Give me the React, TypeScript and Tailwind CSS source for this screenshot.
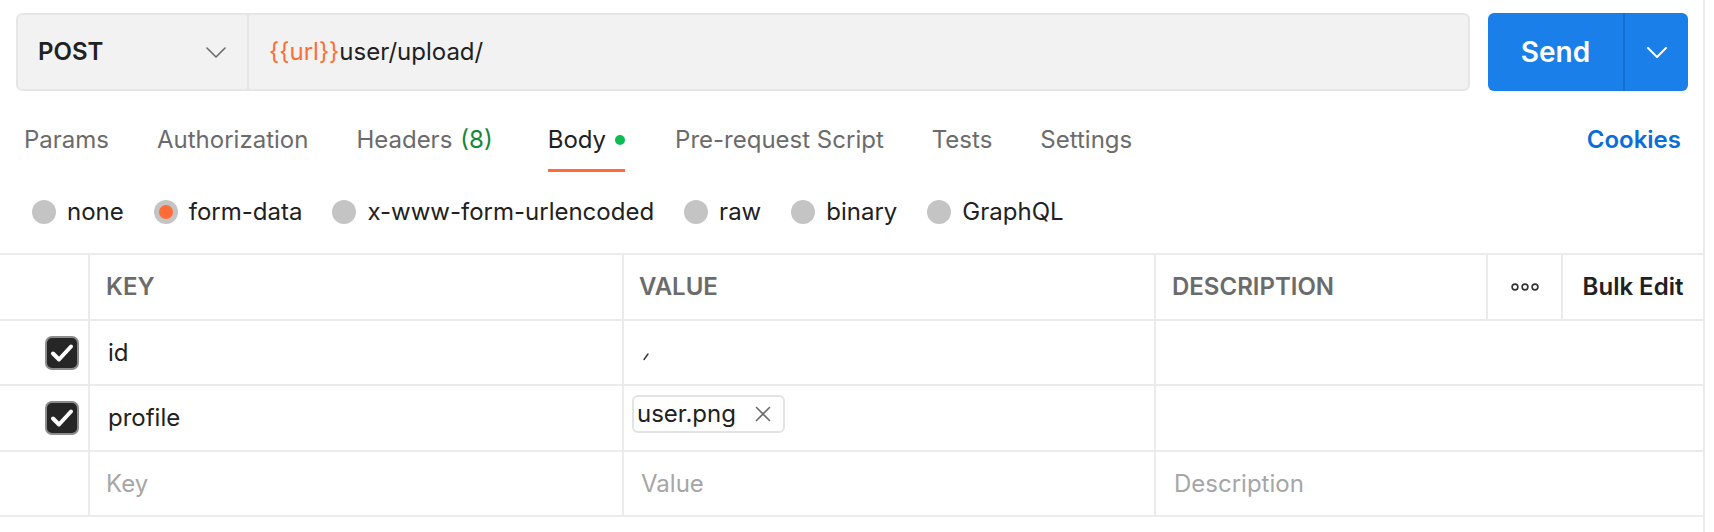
import React from "react";

const tabs = [
  { label: "Params" },
  { label: "Authorization" },
  { label: "Headers", count: "(8)", extra: "mr-[7px]" },
  { label: "Body", active: true, dot: true, extra: "mr-[2px]" },
  { label: "Pre-request Script" },
  { label: "Tests" },
  { label: "Settings" },
];

const bodyTypes = [
  { label: "none" },
  { label: "form-data", selected: true },
  { label: "x-www-form-urlencoded" },
  { label: "raw" },
  { label: "binary" },
  { label: "GraphQL" },
];

const Chevron = ({ color, width = 2 }: { color: string; width?: number }) => (
  <svg width="20" height="11" viewBox="0 0 20 11" fill="none">
    <path d="M1 1l9 9 9-9" stroke={color} strokeWidth={width} strokeLinecap="round" strokeLinejoin="round" />
  </svg>
);

const Checkbox = () => (
  <div className="w-[34px] h-[34px] rounded-[7px] bg-[#262626] border-2 border-[#8c8c8c] flex items-center justify-center">
    <svg width="24" height="20" viewBox="0 0 24 20" fill="none">
      <path d="M3 10.5l6 6L21 3.5" stroke="white" strokeWidth="4" strokeLinecap="round" strokeLinejoin="round" />
    </svg>
  </div>
);

const Radio = ({ selected }: { selected?: boolean }) => (
  <span className="w-[24px] h-[24px] rounded-full bg-[#c4c4c4] flex items-center justify-center">
    {selected && <span className="w-[14px] h-[14px] rounded-full bg-[#ff6c37]" />}
  </span>
);

const RequestBody: React.FC = () => {
  return (
    <div className="w-[1714px] h-[532px] bg-white font-['Inter',sans-serif] text-[24px] leading-[32px] text-[#212121]">
      <div className="w-[1705px] h-full border-r-2 border-[#ebebeb]">
        {/* url bar */}
        <div className="flex gap-[18px] pl-[16px] pr-[15px] pt-[13px]">
          <div className="flex-1 h-[78px] flex bg-[#f2f2f2] border-2 border-[#e6e6e6] rounded-[6px]">
            <div className="w-[231px] flex items-center justify-between pl-[20px] pr-[21px] border-r-2 border-[#e6e6e6]">
              <span className="font-semibold">POST</span>
              <Chevron color="#6b6b6b" width={1.6} />
            </div>
            <div className="flex items-center pl-[20px]">
              <span className="text-[#ff6c37]">{"{{url}}"}</span>
              <span>user/upload/</span>
            </div>
          </div>
          <div className="w-[200px] h-[78px] flex rounded-[6px] bg-[#1a7fe8] text-white">
            <div className="w-[135px] flex items-center justify-center text-[28px] font-semibold">Send</div>
            <div className="flex-1 flex items-center justify-center border-l-2 border-[#1670d2]">
              <Chevron color="white" width={2} />
            </div>
          </div>
        </div>

        {/* tabs */}
        <div className="flex h-[81px] pl-[24px] pr-[22px]">
          <div className="flex gap-[48px]">
            {tabs.map((t) => (
              <div key={t.label} className={`flex flex-col pt-[33px] ${t.extra ?? ""}`}>
                <div className={`flex items-center ${t.active ? "text-[#212121]" : "text-[#6b6b6b]"}`}>
                  <span>{t.label}</span>
                  {t.count && <span className="ml-[8px] text-[#14873b]">{t.count}</span>}
                  {t.dot && <span className="ml-[9px] w-[10px] h-[10px] rounded-full bg-[#0cbb52]" />}
                </div>
                <div className={`mt-[13px] h-[3px] ${t.active ? "bg-[#ff6c37]" : ""}`} />
              </div>
            ))}
          </div>
          <div className="ml-auto pt-[33px] font-semibold text-[#0b6ed8]">Cookies</div>
        </div>

        {/* body type radios */}
        <div className="flex items-center h-[81px] pl-[32px] gap-[30px] pb-[2px]">
          {bodyTypes.map((b) => (
            <label key={b.label} className="flex items-center gap-[11px]">
              <Radio selected={b.selected} />
              <span>{b.label}</span>
            </label>
          ))}
        </div>

        {/* form data table */}
        <div className="border-t-2 border-[#ebebeb]">
          <div className="flex h-[66px] border-b-2 border-[#ebebeb] font-semibold text-[#6b6b6b]">
            <div className="w-[90px] border-r-2 border-[#ebebeb]" />
            <div className="w-[534px] border-r-2 border-[#ebebeb] flex items-center pl-[16px]">KEY</div>
            <div className="w-[532px] border-r-2 border-[#ebebeb] flex items-center pl-[15px]">VALUE</div>
            <div className="w-[332px] border-r-2 border-[#ebebeb] flex items-center pl-[16px]">DESCRIPTION</div>
            <div className="w-[75px] border-r-2 border-[#ebebeb] flex items-center justify-center">
              <svg width="28" height="8" viewBox="0 0 28 8" fill="none">
                <circle cx="4" cy="4" r="2.9" stroke="#333" strokeWidth="1.6" />
                <circle cx="14" cy="4" r="2.9" stroke="#333" strokeWidth="1.6" />
                <circle cx="24" cy="4" r="2.9" stroke="#333" strokeWidth="1.6" />
              </svg>
            </div>
            <div className="flex-1 flex items-center justify-center text-[#212121]">Bulk Edit</div>
          </div>

          <div className="flex h-[65px] border-b-2 border-[#ebebeb]">
            <div className="w-[90px] border-r-2 border-[#ebebeb] flex items-center justify-end pr-[9px]">
              <Checkbox />
            </div>
            <div className="w-[534px] border-r-2 border-[#ebebeb] flex items-center pl-[18px]">id</div>
            <div className="w-[532px] border-r-2 border-[#ebebeb] flex items-center pl-[18px] pt-[6px]">
              <svg width="8" height="10" viewBox="0 0 8 10" fill="none">
                <path d="M6 3L2 8.5" stroke="#333" strokeWidth="1.4" strokeLinecap="round" />
              </svg>
            </div>
            <div className="flex-1" />
          </div>

          <div className="flex h-[66px] border-b-2 border-[#ebebeb]">
            <div className="w-[90px] border-r-2 border-[#ebebeb] flex items-center justify-end pr-[9px]">
              <Checkbox />
            </div>
            <div className="w-[534px] border-r-2 border-[#ebebeb] flex items-center pl-[18px]">profile</div>
            <div className="w-[532px] border-r-2 border-[#ebebeb] flex items-center pl-[8px] pb-[8px]">
              <div className="h-[38px] flex items-center gap-[19px] pl-[3px] pr-[12px] border-2 border-[#e3e3e3] rounded-[6px]">
                <span>user.png</span>
                <svg width="16" height="16" viewBox="0 0 16 16" fill="none">
                  <path d="M1.5 1.5l13 13M14.5 1.5l-13 13" stroke="#6b6b6b" strokeWidth="1.6" strokeLinecap="round" />
                </svg>
              </div>
            </div>
            <div className="flex-1" />
          </div>

          <div className="flex h-[65px] border-b-2 border-[#ebebeb] text-[#a6a6a6]">
            <div className="w-[90px] border-r-2 border-[#ebebeb]" />
            <div className="w-[534px] border-r-2 border-[#ebebeb] flex items-center pl-[16px]">Key</div>
            <div className="w-[532px] border-r-2 border-[#ebebeb] flex items-center pl-[17px]">Value</div>
            <div className="flex-1 flex items-center pl-[18px]">Description</div>
          </div>
        </div>
      </div>
    </div>
  );
};

export default function App() {
  return <RequestBody />;
}
